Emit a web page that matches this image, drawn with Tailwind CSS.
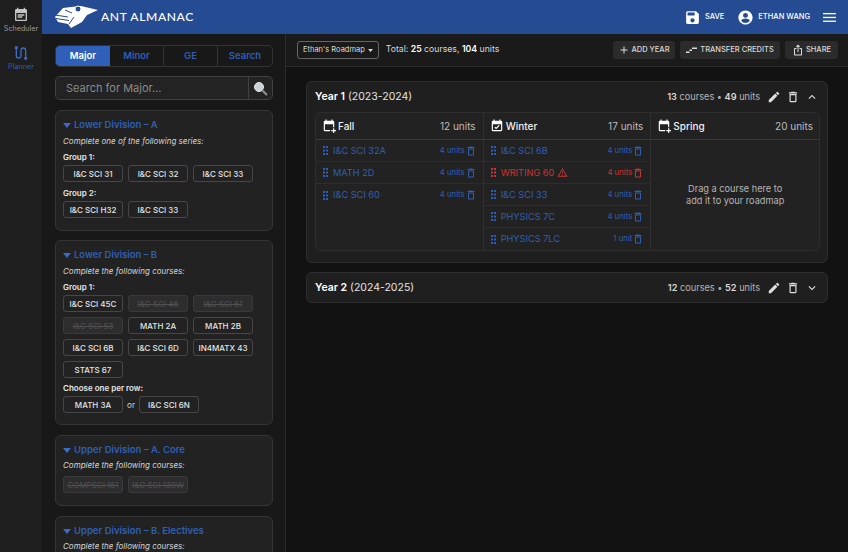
<!DOCTYPE html>
<html lang="en">
<head>
    <meta charset="UTF-8">
    <meta name="viewport" content="width=device-width, initial-scale=1.0">
    <title>AntAlmanac Planner</title>
    <script src="https://cdn.jsdelivr.net/npm/@tailwindcss/browser@4"></script>
</head>
<body class="w-[848px] h-[552px] overflow-hidden bg-[#121212] font-['Inter',sans-serif] text-white">
<div class="flex h-[552px]">
    <!-- left rail -->
    <nav class="w-[42px] shrink-0 bg-[#1e1e1e] flex flex-col items-center pt-[7px]">
        <div class="flex flex-col items-center text-[#9b9b9b]">
            <svg class="w-[16px] h-[16px]" viewBox="0 0 24 24" fill="#c4c4c4"><path d="M19 3h-1V1h-2v2H8V1H6v2H5c-1.100 0-2 .9-2 2v14c0 1.100.9 2 2 2h14c1.100 0 2-.9 2-2V5c0-1.100-.9-2-2-2zm0 16H5V9h14v10zM7 11h10v2H7zm0 3h7v2H7z"/></svg>
            <span class="text-[7.200px] leading-[10px] mt-[1px]">Scheduler</span>
        </div>
        <div class="flex flex-col items-center text-[#2f5fb5] mt-[11px]">
            <svg class="w-[16px] h-[16px]" viewBox="0 0 24 24" fill="none" stroke="#3a6cc4" stroke-width="2"><path d="M5 4v12a3.500 3.500 0 0 0 7 0V8a3.500 3.500 0 0 1 7 0v12"/><circle cx="5" cy="4" r="1.500" fill="#3a6cc4"/><circle cx="19" cy="20" r="1.500" fill="#3a6cc4"/></svg>
            <span class="text-[7.200px] leading-[10px] mt-[1px]">Planner</span>
        </div>
    </nav>

    <div class="flex-1 flex flex-col min-w-0">
        <!-- header -->
        <header class="h-[34px] shrink-0 bg-[#254b92] flex items-center pl-[8px] pr-[12px]">
            <svg class="w-[50px] h-[30px] mt-[2px]" viewBox="0 0 50 30" fill="white">
                <path d="M13 5 L21 4 L31 3 L48 7 L37 12 L32 19 L21 25 L18 21 L8 19 L5 14 Z"/>
                <circle cx="28" cy="6" r="3" fill="#254b92" stroke="white"/>
                <path d="M5 12 L18 14 M6 15.500 L19 17.500 M15 7 L22 10 M19 21 L24 14" stroke="#254b92" stroke-width="1" fill="none"/>
            </svg>
            <span class="ml-[1px] font-['Lato',sans-serif] text-[12.100px] tracking-[0.6px] font-medium">ANT ALMANAC</span>
            <div class="ml-auto flex items-center">
                <svg class="w-[17px] h-[17px]" viewBox="0 0 24 24" fill="white"><path d="M17 3H5c-1.110 0-2 .9-2 2v14c0 1.100.89 2 2 2h14c1.100 0 2-.9 2-2V7l-4-4zm-5 16c-1.660 0-3-1.340-3-3s1.340-3 3-3 3 1.340 3 3-1.340 3-3 3zm3-10H5V5h10v4z"/></svg>
                <span class="ml-[4px] text-[7.500px] font-medium">SAVE</span>
                <svg class="ml-[13px] w-[17px] h-[17px]" viewBox="0 0 24 24" fill="white"><path d="M12 2C6.480 2 2 6.480 2 12s4.480 10 10 10 10-4.480 10-10S17.520 2 12 2zm0 3.500a3.500 3.500 0 1 1 0 7 3.500 3.500 0 0 1 0-7zm0 14.200c-2.500 0-4.710-1.280-6-3.220.03-1.990 4-3.080 6-3.080s5.970 1.090 6 3.080c-1.290 1.940-3.500 3.220-6 3.220z"/></svg>
                <span class="ml-[4px] text-[7.500px] font-medium">ETHAN WANG</span>
                <svg class="ml-[13px] w-[13px] h-[13px]" viewBox="0 0 13 13" fill="white"><rect y="2" width="13" height="1.300"/><rect y="5.800" width="13" height="1.300"/><rect y="9.600" width="13" height="1.300"/></svg>
            </div>
        </header>

        <div class="flex-1 flex min-h-0">
            <!-- sidebar -->
            <aside class="w-[244px] shrink-0 bg-[#181818] border-r border-[#2c2c2c] pl-[13px] pr-[12px] pt-[11px] overflow-hidden">
                <div class="h-[22px] flex rounded-[5px] border border-[#333] text-[9.500px] font-semibold text-[#2f5fb5] overflow-hidden">
                    <div class="w-[54px] bg-[#2f5fb8] text-white flex items-center justify-center">Major</div>
                    <div class="w-[54px] border-r border-[#333] flex items-center justify-center">Minor</div>
                    <div class="w-[54px] border-r border-[#333] flex items-center justify-center">GE</div>
                    <div class="flex-1 flex items-center justify-center">Search</div>
                </div>
                <div class="h-[24px] mt-[9px] flex rounded-[5px] border border-[#414141] bg-[#232323]">
                    <div class="flex-1 flex items-center pl-[10px] text-[11px] text-[#8a8a8a]">Search for Major...</div>
                    <div class="w-[24px] border-l border-[#414141] flex items-center justify-center">
                        <svg class="w-[15px] h-[15px]" viewBox="0 0 15 15"><circle cx="6" cy="6" r="4.500" fill="#c9d3d8" stroke="#e6e6e6"/><path d="M9.500 9.500 L14 14" stroke="#8e8e8e" stroke-width="2.200"/></svg>
                    </div>
                </div>

                <section class="mt-[10px] h-[121px] rounded-[6px] border border-[#343434] bg-[#222] px-[7px] pt-[8px]">
                    <div class="flex items-center text-[9.500px] font-semibold text-[#2f5fb5] h-[13px]"><svg class="w-[8px] h-[5px] mr-[3px]" viewBox="0 0 8 5" fill="#3a6cc4"><path d="M0 0h8L4 5z"/></svg>Lower Division – A</div>
                    <p class="mt-[4px] text-[8px] leading-[11px] italic text-[#d4d4d4]">Complete one of the following series:</p>
                    <p class="mt-[5px] text-[8px] leading-[11px] font-semibold text-[#e6e6e6]">Group 1:</p>
                    <div class="mt-[2px] flex flex-wrap gap-[5px]">
                        <div class="w-[60px] h-[17px] rounded-[3px] border border-[#474747] flex items-center justify-center text-[8px] font-medium text-[#e4e4e4]">I&amp;C SCI 31</div>
                        <div class="w-[60px] h-[17px] rounded-[3px] border border-[#474747] flex items-center justify-center text-[8px] font-medium text-[#e4e4e4]">I&amp;C SCI 32</div>
                        <div class="w-[60px] h-[17px] rounded-[3px] border border-[#474747] flex items-center justify-center text-[8px] font-medium text-[#e4e4e4]">I&amp;C SCI 33</div>
                    </div>
                    <p class="mt-[6px] text-[8px] leading-[11px] font-semibold text-[#e6e6e6]">Group 2:</p>
                    <div class="mt-[2px] flex flex-wrap gap-[5px]">
                        <div class="w-[60px] h-[17px] rounded-[3px] border border-[#474747] flex items-center justify-center text-[8px] font-medium text-[#e4e4e4]">I&amp;C SCI H32</div>
                        <div class="w-[60px] h-[17px] rounded-[3px] border border-[#474747] flex items-center justify-center text-[8px] font-medium text-[#e4e4e4]">I&amp;C SCI 33</div>
                    </div>
                </section>

                <section class="mt-[9px] h-[185px] rounded-[6px] border border-[#343434] bg-[#222] px-[7px] pt-[8px]">
                    <div class="flex items-center text-[9.500px] font-semibold text-[#2f5fb5] h-[13px]"><svg class="w-[8px] h-[5px] mr-[3px]" viewBox="0 0 8 5" fill="#3a6cc4"><path d="M0 0h8L4 5z"/></svg>Lower Division – B</div>
                    <p class="mt-[4px] text-[8px] leading-[11px] italic text-[#d4d4d4]">Complete the following courses:</p>
                    <p class="mt-[5px] text-[8px] leading-[11px] font-semibold text-[#e6e6e6]">Group 1:</p>
                    <div class="mt-[2px] flex flex-wrap gap-x-[5px] gap-y-[5px] w-[200px]">
                        <div class="w-[60px] h-[17px] rounded-[3px] border border-[#474747] flex items-center justify-center text-[8px] font-medium text-[#e4e4e4]">I&amp;C SCI 45C</div>
                        <div class="w-[60px] h-[17px] rounded-[3px] border border-[#3a3a3a] bg-[#2d2d2d] flex items-center justify-center text-[8px] text-[#505050] line-through">I&amp;C SCI 46</div>
                        <div class="w-[60px] h-[17px] rounded-[3px] border border-[#3a3a3a] bg-[#2d2d2d] flex items-center justify-center text-[8px] text-[#505050] line-through">I&amp;C SCI 51</div>
                        <div class="w-[60px] h-[17px] rounded-[3px] border border-[#3a3a3a] bg-[#2d2d2d] flex items-center justify-center text-[8px] text-[#505050] line-through">I&amp;C SCI 53</div>
                        <div class="w-[60px] h-[17px] rounded-[3px] border border-[#474747] flex items-center justify-center text-[8px] font-medium text-[#e4e4e4]">MATH 2A</div>
                        <div class="w-[60px] h-[17px] rounded-[3px] border border-[#474747] flex items-center justify-center text-[8px] font-medium text-[#e4e4e4]">MATH 2B</div>
                        <div class="w-[60px] h-[17px] rounded-[3px] border border-[#474747] flex items-center justify-center text-[8px] font-medium text-[#e4e4e4]">I&amp;C SCI 6B</div>
                        <div class="w-[60px] h-[17px] rounded-[3px] border border-[#474747] flex items-center justify-center text-[8px] font-medium text-[#e4e4e4]">I&amp;C SCI 6D</div>
                        <div class="w-[60px] h-[17px] rounded-[3px] border border-[#474747] flex items-center justify-center text-[8px] font-medium text-[#e4e4e4]">IN4MATX 43</div>
                        <div class="w-[60px] h-[17px] rounded-[3px] border border-[#474747] flex items-center justify-center text-[8px] font-medium text-[#e4e4e4]">STATS 67</div>
                    </div>
                    <p class="mt-[5px] text-[8px] leading-[11px] font-semibold text-[#e6e6e6]">Choose one per row:</p>
                    <div class="mt-[2px] flex items-center">
                        <div class="w-[60px] h-[17px] rounded-[3px] border border-[#474747] flex items-center justify-center text-[8px] font-medium text-[#e4e4e4]">MATH 3A</div>
                        <span class="w-[16px] text-center text-[8px] text-[#d4d4d4]">or</span>
                        <div class="w-[60px] h-[17px] rounded-[3px] border border-[#474747] flex items-center justify-center text-[8px] font-medium text-[#e4e4e4]">I&amp;C SCI 6N</div>
                    </div>
                </section>

                <section class="mt-[10px] h-[71px] rounded-[6px] border border-[#343434] bg-[#222] px-[7px] pt-[8px]">
                    <div class="flex items-center text-[9.500px] font-semibold text-[#2f5fb5] h-[13px]"><svg class="w-[8px] h-[5px] mr-[3px]" viewBox="0 0 8 5" fill="#3a6cc4"><path d="M0 0h8L4 5z"/></svg>Upper Division – A. Core</div>
                    <p class="mt-[3px] text-[8px] leading-[11px] italic text-[#d4d4d4]">Complete the following courses:</p>
                    <div class="mt-[5px] flex gap-[5px]">
                        <div class="w-[60px] h-[17px] rounded-[3px] border border-[#3a3a3a] bg-[#2d2d2d] flex items-center justify-center text-[8px] text-[#505050] line-through whitespace-nowrap">COMPSCI 161</div>
                        <div class="w-[60px] h-[17px] rounded-[3px] border border-[#3a3a3a] bg-[#2d2d2d] flex items-center justify-center text-[8px] text-[#505050] line-through whitespace-nowrap">I&amp;C SCI 139W</div>
                    </div>
                </section>

                <section class="mt-[10px] h-[80px] rounded-[6px] border border-[#343434] bg-[#222] px-[7px] pt-[8px]">
                    <div class="flex items-center text-[9.500px] font-semibold text-[#2f5fb5] h-[13px]"><svg class="w-[8px] h-[5px] mr-[3px]" viewBox="0 0 8 5" fill="#3a6cc4"><path d="M0 0h8L4 5z"/></svg>Upper Division – B. Electives</div>
                    <p class="mt-[3px] text-[8px] leading-[11px] italic text-[#d4d4d4]">Complete the following courses:</p>
                </section>
            </aside>

            <!-- main -->
            <main class="flex-1 min-w-0 flex flex-col">
                <div class="h-[33px] shrink-0 bg-[#1a1a1a] border-b border-[#2c2c2c] flex items-center pl-[11px] pr-[10px]">
                    <div class="h-[18px] px-[5px] rounded-[3px] border border-[#666] flex items-center text-[7.500px] text-[#ddd]">Ethan's Roadmap<svg class="w-[5px] h-[3px] ml-[3px]" viewBox="0 0 8 5" fill="#ddd"><path d="M0 0h8L4 5z"/></svg></div>
                    <p class="ml-[7px] text-[8.700px] text-[#d8d8d8]">Total: <b class="font-semibold text-white">25</b> courses, <b class="font-semibold text-white">104</b> units</p>
                    <div class="ml-auto flex gap-[5px] text-[7.500px] font-medium text-[#d8d8d8]">
                        <div class="h-[18px] w-[62px] rounded-[3px] bg-[#2b2b2b] flex items-center justify-center"><svg class="w-[12px] h-[12px] mr-[1px]" viewBox="0 0 24 24" fill="#ddd"><path d="M19 13h-6v6h-2v-6H5v-2h6V5h2v6h6z"/></svg>ADD YEAR</div>
                        <div class="h-[18px] w-[100px] rounded-[3px] bg-[#2b2b2b] flex items-center justify-center"><svg class="w-[11px] h-[8px] mr-[3px]" viewBox="0 0 11 8" fill="#ddd"><path d="M0 5.500h3.500V7H0zM3.500 3.500h2.500V5H3.500zM6 1.500h5V3H6z"/></svg>TRANSFER CREDITS</div>
                        <div class="h-[18px] w-[53px] rounded-[3px] bg-[#2b2b2b] flex items-center justify-center"><svg class="w-[12px] h-[12px] mr-[2px]" viewBox="0 0 24 24" fill="#ddd"><path d="M16 5l-1.420 1.420-1.590-1.590V16h-1.980V4.830L9.420 6.420 8 5l4-4 4 4zm4 5v11c0 1.100-.9 2-2 2H6c-1.110 0-2-.9-2-2V10c0-1.110.89-2 2-2h3v2H6v11h12V10h-3V8h3c1.100 0 2 .89 2 2z"/></svg>SHARE</div>
                    </div>
                </div>
                <div class="flex-1 bg-[#121212] px-[20px] pt-[14px]">
                    <section class="h-[182px] w-[522px] rounded-[6px] border border-[#2e2e2e] bg-[#1f1f1f] px-[7px]">
                        <div class="h-[30px] flex items-center pl-[1px]">
                            <span class="text-[10.500px] text-[#e4e4e4]"><b class="font-semibold text-white">Year 1</b> (2023-2024)</span>
                            <span class="ml-auto text-[9.200px] text-[#b5b5b5]"><b class="font-semibold text-[#d8d8d8]">13</b> courses • <b class="font-semibold text-[#d8d8d8]">49</b> units</span>
                            <svg class="ml-[7px] w-[14px] h-[14px]" viewBox="0 0 24 24" fill="#e0e0e0"><path d="M3 17.250V21h3.750L17.810 9.940l-3.750-3.750L3 17.250zM20.710 7.040a1 1 0 0 0 0-1.410l-2.340-2.340a1 1 0 0 0-1.410 0l-1.830 1.830 3.750 3.750 1.830-1.830z"/></svg>
                            <svg class="ml-[5px] w-[14px] h-[14px]" viewBox="0 0 24 24" fill="#e0e0e0"><path d="M6 19c0 1.100.9 2 2 2h8c1.100 0 2-.9 2-2V7H6v12zM8 9h8v10H8V9zm7.500-5-1-1h-5l-1 1H5v2h14V4z"/></svg>
                            <svg class="ml-[5px] mr-[1px] w-[14px] h-[14px]" viewBox="0 0 24 24" fill="#e0e0e0"><path d="M7.410 15.410 12 10.830l4.590 4.580L18 14l-6-6-6 6z"/></svg>
                        </div>
                        <div class="h-[139px] w-[505px] ml-[1px] rounded-[6px] border border-[#2e2e2e] bg-[#222] grid grid-cols-3 overflow-hidden">
                            <!-- Fall -->
                            <div class="border-r border-[#303030] flex flex-col">
                                <div class="h-[27px] border-b border-[#383838] flex items-center pl-[6px] pr-[7px]">
                                    <svg class="w-[14px] h-[14px] mr-[2px]" viewBox="0 0 24 24" fill="white"><path d="M19 3h-1V1h-2v2H8V1H6v2H5c-1.100 0-2 .9-2 2v14c0 1.100.9 2 2 2h9v-2H5V9h14v5h2V5c0-1.100-.9-2-2-2z"/><path d="M19 16v3h-3v2h3v3h2v-3h3v-2h-3v-3z"/></svg>
                                    <span class="text-[10px] font-medium text-[#f0f0f0]">Fall</span>
                                    <span class="ml-auto text-[10px] text-[#bdbdbd]">12 units</span>
                                </div>
                                <div class="h-[22px] border-b border-[#2d2d2d] flex items-center pl-[7px] pr-[6px] text-[#2f5fb5]"><svg class="w-[5px] h-[9px] mr-[5px]" viewBox="0 0 5 9" fill="#2f5fb5"><rect width="2" height="2"/><rect x="3" width="2" height="2"/><rect y="3.500" width="2" height="2"/><rect x="3" y="3.500" width="2" height="2"/><rect y="7" width="2" height="2"/><rect x="3" y="7" width="2" height="2"/></svg><span class="text-[9.200px]">I&amp;C SCI 32A</span><span class="ml-auto text-[7.800px]">4 units</span><svg class="w-[12px] h-[12px]" viewBox="0 0 24 24" fill="#2f5fb5"><path d="M6 19c0 1.100.9 2 2 2h8c1.100 0 2-.9 2-2V7H6v12zM8 9h8v10H8V9zm7.500-5-1-1h-5l-1 1H5v2h14V4z"/></svg></div>
                                <div class="h-[22px] border-b border-[#2d2d2d] flex items-center pl-[7px] pr-[6px] text-[#2f5fb5]"><svg class="w-[5px] h-[9px] mr-[5px]" viewBox="0 0 5 9" fill="#2f5fb5"><rect width="2" height="2"/><rect x="3" width="2" height="2"/><rect y="3.500" width="2" height="2"/><rect x="3" y="3.500" width="2" height="2"/><rect y="7" width="2" height="2"/><rect x="3" y="7" width="2" height="2"/></svg><span class="text-[9.200px]">MATH 2D</span><span class="ml-auto text-[7.800px]">4 units</span><svg class="w-[12px] h-[12px]" viewBox="0 0 24 24" fill="#2f5fb5"><path d="M6 19c0 1.100.9 2 2 2h8c1.100 0 2-.9 2-2V7H6v12zM8 9h8v10H8V9zm7.500-5-1-1h-5l-1 1H5v2h14V4z"/></svg></div>
                                <div class="h-[22px] flex items-center pl-[7px] pr-[6px] text-[#2f5fb5]"><svg class="w-[5px] h-[9px] mr-[5px]" viewBox="0 0 5 9" fill="#2f5fb5"><rect width="2" height="2"/><rect x="3" width="2" height="2"/><rect y="3.500" width="2" height="2"/><rect x="3" y="3.500" width="2" height="2"/><rect y="7" width="2" height="2"/><rect x="3" y="7" width="2" height="2"/></svg><span class="text-[9.200px]">I&amp;C SCI 60</span><span class="ml-auto text-[7.800px]">4 units</span><svg class="w-[12px] h-[12px]" viewBox="0 0 24 24" fill="#2f5fb5"><path d="M6 19c0 1.100.9 2 2 2h8c1.100 0 2-.9 2-2V7H6v12zM8 9h8v10H8V9zm7.500-5-1-1h-5l-1 1H5v2h14V4z"/></svg></div>
                            </div>
                            <!-- Winter -->
                            <div class="border-r border-[#303030] flex flex-col">
                                <div class="h-[27px] border-b border-[#383838] flex items-center pl-[6px] pr-[7px]">
                                    <svg class="w-[14px] h-[14px] mr-[2px]" viewBox="0 0 24 24" fill="white"><path d="M19 3h-1V1h-2v2H8V1H6v2H5c-1.100 0-2 .9-2 2v14c0 1.100.9 2 2 2h14c1.100 0 2-.9 2-2V5c0-1.100-.9-2-2-2zm0 16H5V9h14v10zm-8.500-1.500-3-3 1.400-1.400 1.600 1.600 4.600-4.600 1.400 1.400z"/></svg>
                                    <span class="text-[10px] font-medium text-[#f0f0f0]">Winter</span>
                                    <span class="ml-auto text-[10px] text-[#bdbdbd]">17 units</span>
                                </div>
                                <div class="h-[22px] border-b border-[#2d2d2d] flex items-center pl-[7px] pr-[6px] text-[#2f5fb5]"><svg class="w-[5px] h-[9px] mr-[5px]" viewBox="0 0 5 9" fill="#2f5fb5"><rect width="2" height="2"/><rect x="3" width="2" height="2"/><rect y="3.500" width="2" height="2"/><rect x="3" y="3.500" width="2" height="2"/><rect y="7" width="2" height="2"/><rect x="3" y="7" width="2" height="2"/></svg><span class="text-[9.200px]">I&amp;C SCI 6B</span><span class="ml-auto text-[7.800px]">4 units</span><svg class="w-[12px] h-[12px]" viewBox="0 0 24 24" fill="#2f5fb5"><path d="M6 19c0 1.100.9 2 2 2h8c1.100 0 2-.9 2-2V7H6v12zM8 9h8v10H8V9zm7.500-5-1-1h-5l-1 1H5v2h14V4z"/></svg></div>
                                <div class="h-[22px] border-b border-[#2d2d2d] flex items-center pl-[7px] pr-[6px] text-[#c73636]"><svg class="w-[5px] h-[9px] mr-[5px]" viewBox="0 0 5 9" fill="#c73636"><rect width="2" height="2"/><rect x="3" width="2" height="2"/><rect y="3.500" width="2" height="2"/><rect x="3" y="3.500" width="2" height="2"/><rect y="7" width="2" height="2"/><rect x="3" y="7" width="2" height="2"/></svg><span class="text-[9.200px]">WRITING 60</span><svg class="ml-[3px] w-[11px] h-[11px]" viewBox="0 0 24 24" fill="#c73636"><path d="M12 5.990 19.530 19H4.470L12 5.990M12 2 1 21h22L12 2zm1 14h-2v2h2v-2zm0-6h-2v4h2v-4z"/></svg><span class="ml-auto text-[7.800px]">4 units</span><svg class="w-[12px] h-[12px]" viewBox="0 0 24 24" fill="#c73636"><path d="M6 19c0 1.100.9 2 2 2h8c1.100 0 2-.9 2-2V7H6v12zM8 9h8v10H8V9zm7.500-5-1-1h-5l-1 1H5v2h14V4z"/></svg></div>
                                <div class="h-[22px] border-b border-[#2d2d2d] flex items-center pl-[7px] pr-[6px] text-[#2f5fb5]"><svg class="w-[5px] h-[9px] mr-[5px]" viewBox="0 0 5 9" fill="#2f5fb5"><rect width="2" height="2"/><rect x="3" width="2" height="2"/><rect y="3.500" width="2" height="2"/><rect x="3" y="3.500" width="2" height="2"/><rect y="7" width="2" height="2"/><rect x="3" y="7" width="2" height="2"/></svg><span class="text-[9.200px]">I&amp;C SCI 33</span><span class="ml-auto text-[7.800px]">4 units</span><svg class="w-[12px] h-[12px]" viewBox="0 0 24 24" fill="#2f5fb5"><path d="M6 19c0 1.100.9 2 2 2h8c1.100 0 2-.9 2-2V7H6v12zM8 9h8v10H8V9zm7.500-5-1-1h-5l-1 1H5v2h14V4z"/></svg></div>
                                <div class="h-[22px] border-b border-[#2d2d2d] flex items-center pl-[7px] pr-[6px] text-[#2f5fb5]"><svg class="w-[5px] h-[9px] mr-[5px]" viewBox="0 0 5 9" fill="#2f5fb5"><rect width="2" height="2"/><rect x="3" width="2" height="2"/><rect y="3.500" width="2" height="2"/><rect x="3" y="3.500" width="2" height="2"/><rect y="7" width="2" height="2"/><rect x="3" y="7" width="2" height="2"/></svg><span class="text-[9.200px]">PHYSICS 7C</span><span class="ml-auto text-[7.800px]">4 units</span><svg class="w-[12px] h-[12px]" viewBox="0 0 24 24" fill="#2f5fb5"><path d="M6 19c0 1.100.9 2 2 2h8c1.100 0 2-.9 2-2V7H6v12zM8 9h8v10H8V9zm7.500-5-1-1h-5l-1 1H5v2h14V4z"/></svg></div>
                                <div class="h-[22px] flex items-center pl-[7px] pr-[6px] text-[#2f5fb5]"><svg class="w-[5px] h-[9px] mr-[5px]" viewBox="0 0 5 9" fill="#2f5fb5"><rect width="2" height="2"/><rect x="3" width="2" height="2"/><rect y="3.500" width="2" height="2"/><rect x="3" y="3.500" width="2" height="2"/><rect y="7" width="2" height="2"/><rect x="3" y="7" width="2" height="2"/></svg><span class="text-[9.200px]">PHYSICS 7LC</span><span class="ml-auto text-[7.800px]">1 unit</span><svg class="w-[12px] h-[12px]" viewBox="0 0 24 24" fill="#2f5fb5"><path d="M6 19c0 1.100.9 2 2 2h8c1.100 0 2-.9 2-2V7H6v12zM8 9h8v10H8V9zm7.500-5-1-1h-5l-1 1H5v2h14V4z"/></svg></div>
                            </div>
                            <!-- Spring -->
                            <div class="flex flex-col">
                                <div class="h-[27px] border-b border-[#383838] flex items-center pl-[6px] pr-[6px]">
                                    <svg class="w-[14px] h-[14px] mr-[2px]" viewBox="0 0 24 24" fill="white"><path d="M19 3h-1V1h-2v2H8V1H6v2H5c-1.100 0-2 .9-2 2v14c0 1.100.9 2 2 2h9v-2H5V9h14v5h2V5c0-1.100-.9-2-2-2z"/><path d="M19 16v3h-3v2h3v3h2v-3h3v-2h-3v-3z"/></svg>
                                    <span class="text-[10px] font-medium text-[#f0f0f0]">Spring</span>
                                    <span class="ml-auto text-[10px] text-[#bdbdbd]">20 units</span>
                                </div>
                                <div class="flex-1 flex items-center justify-center text-center text-[9.200px] leading-[12px] text-[#b5b5b5]">Drag a course here to<br>add it to your roadmap</div>
                            </div>
                        </div>
                    </section>
                    <section class="mt-[9px] h-[31px] w-[522px] rounded-[6px] border border-[#2e2e2e] bg-[#1f1f1f] px-[7px] flex items-center">
                        <span class="pl-[1px] text-[10.500px] text-[#e4e4e4]"><b class="font-semibold text-white">Year 2</b> (2024-2025)</span>
                        <span class="ml-auto text-[9.200px] text-[#b5b5b5]"><b class="font-semibold text-[#d8d8d8]">12</b> courses • <b class="font-semibold text-[#d8d8d8]">52</b> units</span>
                        <svg class="ml-[7px] w-[14px] h-[14px]" viewBox="0 0 24 24" fill="#e0e0e0"><path d="M3 17.250V21h3.750L17.810 9.940l-3.750-3.750L3 17.250zM20.710 7.040a1 1 0 0 0 0-1.410l-2.340-2.340a1 1 0 0 0-1.410 0l-1.830 1.830 3.750 3.750 1.830-1.830z"/></svg>
                        <svg class="ml-[5px] w-[14px] h-[14px]" viewBox="0 0 24 24" fill="#e0e0e0"><path d="M6 19c0 1.100.9 2 2 2h8c1.100 0 2-.9 2-2V7H6v12zM8 9h8v10H8V9zm7.500-5-1-1h-5l-1 1H5v2h14V4z"/></svg>
                        <svg class="ml-[5px] mr-[1px] w-[14px] h-[14px]" viewBox="0 0 24 24" fill="#e0e0e0"><path d="M7.410 8.590 12 13.170l4.590-4.580L18 10l-6 6-6-6z"/></svg>
                    </section>
                </div>
            </main>
        </div>
    </div>
</div>
</body>
</html>
